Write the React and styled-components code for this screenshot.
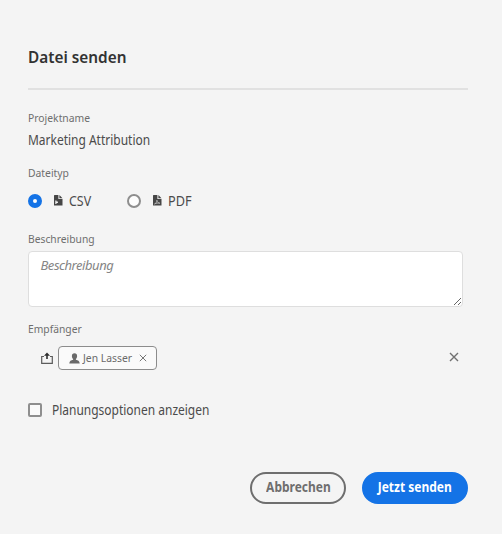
import React from "react";
import styled, { createGlobalStyle } from "styled-components";

const GlobalStyle = createGlobalStyle`
  * { box-sizing: border-box; }
  body {
    margin: 0;
    background: #f4f4f4;
    font-family: "Noto Sans", "Open Sans", sans-serif;
    color: #4b4b4b;
  }
`;

const Dialog = styled.main`
  width: 502px;
  height: 534px;
  padding: 45px 34px 0 28px;
  display: flex;
  flex-direction: column;
  background: #f4f4f4;
`;

/* Narrows the typeface horizontally while keeping its height. */
const Condensed = styled.span`
  display: block;
  white-space: nowrap;
  transform: scaleX(${(p) => p.$scale || 0.887});
  transform-origin: ${(p) => p.$origin || "left"} center;
`;

const Title = styled.h1`
  margin: 0;
  height: 43px;
  padding-bottom: 19px;
  font-size: 16.5px;
  line-height: 24px;
  font-weight: 600;
  color: #323232;
`;

const Divider = styled.hr`
  width: 440px;
  height: 2px;
  margin: 0 0 20px;
  border: 0;
  background: #e1e1e1;
`;

const Label = styled.div`
  height: 16px;
  font-size: 11.5px;
  line-height: 16px;
  color: #6e6e6e;
`;

const Value = styled.div`
  height: 20px;
  margin: 4px 0 15px;
  font-size: 13.5px;
  line-height: 20px;
`;

const RadioGroup = styled.div`
  display: flex;
  height: 20px;
  margin: 10px 0 20px;
`;

const RadioOption = styled.label`
  display: grid;
  grid-template-columns: 14px 9px 1fr;
  column-gap: 12px;
  align-items: center;
  width: ${(p) => p.$width || 99}px;
  font-size: 13.5px;
  line-height: 20px;
`;

const OptionName = styled.span`
  margin-left: -6.5px;
`;

const Radio = styled.span`
  width: 14px;
  height: 14px;
  border-radius: 50%;
  border: ${(p) => (p.$checked ? "5px solid #1473e6" : "2px solid #8e8e8e")};
  background: #fdfdfd;
`;

const Description = styled.textarea`
  display: block;
  width: 435px;
  height: 56px;
  margin: 4px 0 14px;
  padding: 3px 11.5px;
  border: 1px solid #dedede;
  border-radius: 4px;
  background: #fff;
  font: italic 13px/20px "Noto Sans", "Open Sans", sans-serif;
  letter-spacing: -0.45px;
  resize: vertical;
  outline: 0;
  &::placeholder { color: #858585; opacity: 1; }
`;

const Recipients = styled.div`
  display: flex;
  align-items: center;
  width: 431px;
  height: 24px;
  margin: 9px 0 30px;
  padding-left: 13px;
`;

const Tag = styled.span`
  display: flex;
  align-items: center;
  width: 99px;
  height: 24px;
  margin: 0 auto 0 5px;
  padding: 0 9px 0 10px;
  border: 1px solid #8c8c8c;
  border-radius: 4px;
  background: #fafafa;
  font-size: 11.5px;
  line-height: 22px;
  color: #6a6a6a;
`;

const TagName = styled.span`
  width: 57px;
  height: 22px;
  margin-left: 3px;
`;

const CheckRow = styled.label`
  display: flex;
  align-items: center;
  gap: 10px;
  height: 20px;
  font-size: 13.5px;
  line-height: 20px;
`;

const Checkbox = styled.span`
  width: 14px;
  height: 14px;
  border: 2px solid #8e8e8e;
  border-radius: 2px;
  background: #fafafa;
`;

const Actions = styled.footer`
  display: flex;
  justify-content: flex-end;
  gap: 16px;
  margin-top: 52px;
`;

const Button = styled.button`
  display: flex;
  align-items: center;
  justify-content: center;
  width: ${(p) => (p.$primary ? 106 : 96)}px;
  height: 32px;
  padding: 0 0 2px;
  border: 2px solid ${(p) => (p.$primary ? "#1473e6" : "#6e6e6e")};
  border-radius: 16px;
  background: ${(p) => (p.$primary ? "#1473e6" : "transparent")};
  color: ${(p) => (p.$primary ? "#fff" : "#6e6e6e")};
  font: 700 13.5px/20px "Noto Sans", "Open Sans", sans-serif;
`;

const Icon = styled.svg`
  display: block;
  flex: none;
`;

const FileGlyph = styled(Icon)`
  margin-bottom: 2px;
`;

const CloseGlyph = styled(Icon)`
  margin-bottom: ${(p) => p.$lift || 0}px;
`;

const FileIcon = ({ pdf }) => (
  <FileGlyph width="9" height="11" viewBox="0 0 9 11">
    <path d="M.5 0h3.9v4H8.500v6.500H0V.5z" fill="#464646" />
    <path d="M5.400 0 8.500 3.200H5.400z" fill="#464646" />
    {pdf ? (
      <path d="M1.500 9c1.500-.8 2.400-2 2.400-3.800.3 2 1.300 2.800 3 3-2-.3-3.700-.1-5.400.8z" fill="none" stroke="#d8d8d8" strokeWidth=".65" />
    ) : (
      <path d="M1.300 5.500h1.200v1h1.400V8H2.500v1H1.300z" fill="#f4f4f4" />
    )}
  </FileGlyph>
);

const ShareIcon = () => (
  <Icon width="12" height="12" viewBox="0 0 12 12">
    <path d="M3 4.500H.7v6.800h10.600V4.500H9" fill="none" stroke="#5b5b5b" strokeWidth="1.200" />
    <path d="M6 .5 9 3.800H6.800V7H5.200V3.800H3z" fill="#2e2e2e" />
  </Icon>
);

const UserIcon = () => (
  <Icon width="11" height="11" viewBox="0 0 11 11">
    <path d="M5.500.3C3.800.3 2.900 1.400 2.900 3c0 1.300.5 2.300 1.200 3v.8C2.100 7.200.4 8 .3 10.500h10.400C10.600 8 8.900 7.200 6.900 6.800V6c.7-.7 1.200-1.700 1.200-3C8.100 1.400 7.200.3 5.500.3z" fill="#6a6a6a" />
  </Icon>
);

const CrossIcon = ({ size, width, lift }) => (
  <CloseGlyph width={size} height={size} viewBox="0 0 10 10" $lift={lift}>
    <path d="m1 1 8 8M9 1 1 9" fill="none" stroke="#707070" strokeWidth={width} />
  </CloseGlyph>
);

export default function App() {
  return (
    <>
      <GlobalStyle />
      <Dialog>
        <Title><Condensed $scale={0.93}>Datei senden</Condensed></Title>
        <Divider />
        <Label><Condensed $scale={0.9}>Projektname</Condensed></Label>
        <Value><Condensed>Marketing Attribution</Condensed></Value>
        <Label><Condensed $scale={0.9}>Dateityp</Condensed></Label>
        <RadioGroup>
          <RadioOption>
            <Radio $checked />
            <FileIcon />
            <OptionName><Condensed $scale={0.92}>CSV</Condensed></OptionName>
          </RadioOption>
          <RadioOption>
            <Radio />
            <FileIcon pdf />
            <OptionName><Condensed $scale={0.94}>PDF</Condensed></OptionName>
          </RadioOption>
        </RadioGroup>
        <Label><Condensed $scale={0.895}>Beschreibung</Condensed></Label>
        <Description placeholder="Beschreibung" />
        <Label><Condensed $scale={0.895}>Empfänger</Condensed></Label>
        <Recipients>
          <ShareIcon />
          <Tag>
            <UserIcon />
            <TagName><Condensed $scale={0.9}>Jen Lasser</Condensed></TagName>
            <CrossIcon size={8} width={1.2} />
          </Tag>
          <CrossIcon size={10} width={1.4} lift={2} />
        </Recipients>
        <CheckRow>
          <Checkbox />
          <Condensed>Planungsoptionen anzeigen</Condensed>
        </CheckRow>
        <Actions>
          <Button><Condensed $origin="center">Abbrechen</Condensed></Button>
          <Button $primary><Condensed $origin="center">Jetzt senden</Condensed></Button>
        </Actions>
      </Dialog>
    </>
  );
}
